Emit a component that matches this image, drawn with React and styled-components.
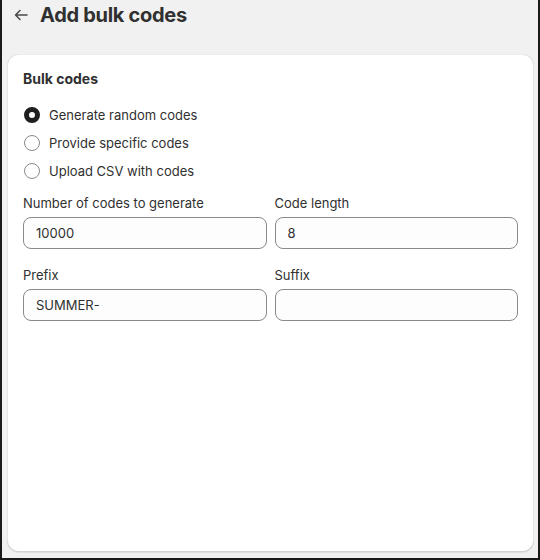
import styled, { createGlobalStyle } from 'styled-components';

const GlobalStyle = createGlobalStyle`
  html, body {
    margin: 0;
    padding: 0;
  }
  body {
    font-family: Inter, "Noto Sans", "Liberation Sans", sans-serif;
    color: #303030;
    -webkit-font-smoothing: antialiased;
  }
  * {
    box-sizing: border-box;
  }
`;

const Frame = styled.div`
  height: 560px;
  display: flex;
  flex-direction: column;
  background: #f1f1f1;
  border-left: 2px solid #1a1a1a;
  border-right: 2px solid #1a1a1a;
  border-bottom: 2px solid #1a1a1a;
`;

const Header = styled.header`
  display: flex;
  align-items: center;
  gap: 12px;
  height: 27px;
  padding: 3px 0 0 12px;
`;

const BackButton = styled.button`
  display: flex;
  align-items: center;
  justify-content: center;
  padding: 0;
  border: 0;
  background: none;
  color: #4a4a4a;
  cursor: pointer;
`;

const Title = styled.h1`
  margin: 0;
  font-size: 20px;
  line-height: 24px;
  font-weight: 700;
  letter-spacing: -0.3px;
  color: #303030;
`;

const Card = styled.section`
  flex: 1;
  margin: 27px 4px 6px 5px;
  padding: 15px 16px 16px;
  background: #ffffff;
  border-radius: 12px;
  box-shadow: 0 1px 0 0 rgba(26, 26, 26, 0.07),
    inset 0 1px 0 0 rgba(208, 208, 208, 0.4),
    inset 1px 0 0 0 rgba(204, 204, 204, 0.5),
    inset -1px 0 0 0 rgba(204, 204, 204, 0.5),
    inset 0 -1px 0 0 rgba(0, 0, 0, 0.17);
  display: flex;
  flex-direction: column;
`;

const CardTitle = styled.h2`
  margin: 0;
  font-size: 14px;
  line-height: 20px;
  font-weight: 650;
`;

const RadioGroup = styled.div`
  display: flex;
  flex-direction: column;
  gap: 8px;
  margin-top: 16px;
`;

const RadioRow = styled.label`
  display: flex;
  align-items: center;
  gap: 9px;
  height: 20px;
  padding-left: 1px;
  font-size: 13px;
  line-height: 20px;
  cursor: pointer;
`;

const RadioDot = styled.span`
  width: 16px;
  height: 16px;
  border-radius: 50%;
  background: #ffffff;
  border: ${(props) => (props.checked ? '5px solid #1f1f1f' : '1px solid #8a8a8a')};
  flex-shrink: 0;
`;

const FieldGrid = styled.div`
  display: grid;
  grid-template-columns: 1fr 1fr;
  column-gap: 8px;
  row-gap: 16px;
  margin-top: 12px;
`;

const Field = styled.div`
  display: flex;
  flex-direction: column;
  gap: 4px;
`;

const Label = styled.label`
  font-size: 13px;
  line-height: 20px;
  color: #303030;
`;

const Input = styled.input`
  height: 32px;
  width: 100%;
  padding: 0 12px;
  border: 1px solid #8a8a8a;
  border-radius: 8px;
  background: #fdfdfd;
  font-family: inherit;
  font-size: 13px;
  color: #303030;
  outline: none;
`;

const options = [
  { id: 'random', label: 'Generate random codes', checked: true },
  { id: 'specific', label: 'Provide specific codes' },
  { id: 'csv', label: 'Upload CSV with codes' },
];

const fields = [
  { id: 'count', label: 'Number of codes to generate', value: '10000' },
  { id: 'length', label: 'Code length', value: '8' },
  { id: 'prefix', label: 'Prefix', value: 'SUMMER-' },
  { id: 'suffix', label: 'Suffix', value: '' },
];

function ArrowLeft() {
  return (
    <svg width="14" height="12" viewBox="0 0 14 12" fill="none">
      <path
        d="M13 6H1.5M6 1.5L1.5 6L6 10.5"
        stroke="currentColor"
        strokeWidth="1.5"
        strokeLinecap="round"
        strokeLinejoin="round"
      />
    </svg>
  );
}

export default function App() {
  return (
    <>
      <GlobalStyle />
      <Frame>
        <Header>
          <BackButton aria-label="Back">
            <ArrowLeft />
          </BackButton>
          <Title>Add bulk codes</Title>
        </Header>
        <Card>
          <CardTitle>Bulk codes</CardTitle>
          <RadioGroup>
            {options.map((opt) => (
              <RadioRow key={opt.id}>
                <RadioDot checked={opt.checked} />
                {opt.label}
              </RadioRow>
            ))}
          </RadioGroup>
          <FieldGrid>
            {fields.map((f) => (
              <Field key={f.id}>
                <Label htmlFor={f.id}>{f.label}</Label>
                <Input id={f.id} defaultValue={f.value} />
              </Field>
            ))}
          </FieldGrid>
        </Card>
      </Frame>
    </>
  );
}
